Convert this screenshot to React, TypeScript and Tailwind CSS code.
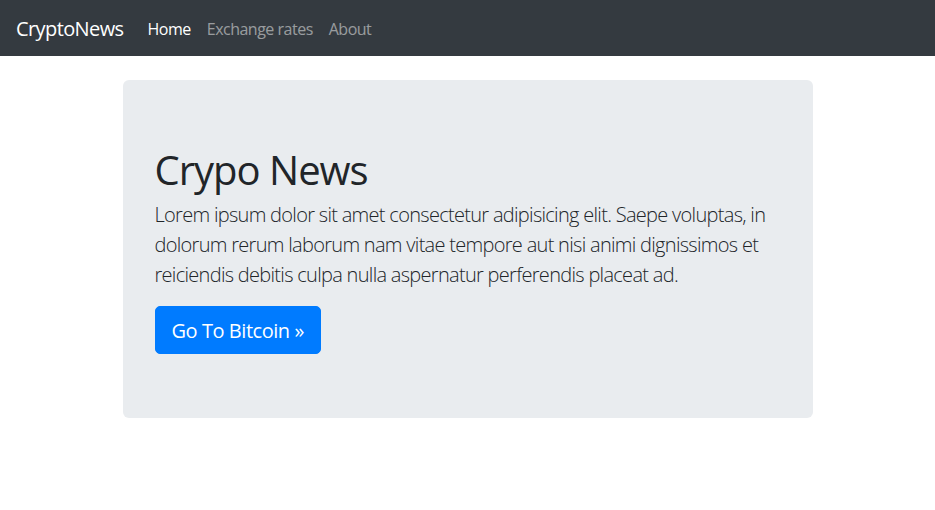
export default function App() {
  return (
    <div className="min-h-[510px] bg-white text-[#212529] font-['Open_Sans',sans-serif]">
      <nav className="h-14 bg-[#343a40] flex items-center px-4 pt-0.5">
        <a className="text-white text-[20px] leading-[30px] mr-4 tracking-[-0.6px]">CryptoNews</a>
        <div className="flex text-[16px] tracking-[-0.5px]">
          <a className="px-2 text-white">Home</a>
          <a className="px-2 text-white/50">Exchange rates</a>
          <a className="px-2 text-white/50">About</a>
        </div>
      </nav>
      <div className="w-[720px] mx-auto px-[15px] mt-6">
        <div className="bg-[#e9ecef] rounded-md px-8 py-16">
          <h1 className="text-[40px] leading-[48px] pt-0.5 mb-1.5 tracking-[-1px]">Crypo News</h1>
          <p className="text-[20px] leading-[30px] font-light mb-4 tracking-[-0.7px]">
            Lorem ipsum dolor sit amet consectetur adipisicing elit. Saepe voluptas, in dolorum rerum laborum nam vitae tempore aut nisi animi dignissimos et reiciendis debitis culpa nulla aspernatur perferendis placeat ad.
          </p>
          <a className="inline-block bg-[#007bff] text-white text-[20px] leading-[30px] px-4 pt-[9px] pb-[7px] border border-[#007bff] rounded-[5px] tracking-[-0.45px]">
            Go To Bitcoin &raquo;
          </a>
        </div>
      </div>
    </div>
  );
}
